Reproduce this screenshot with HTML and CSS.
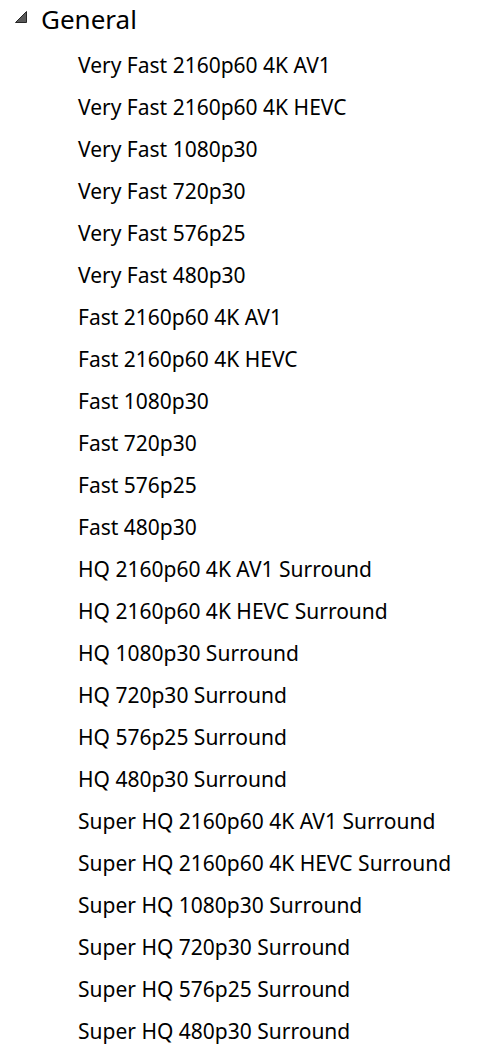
FILE: index.html
```html
<!DOCTYPE html>
<html>
<head>
<meta charset="utf-8">
<link rel="stylesheet" href="styles.css">
</head>
<body>
<div class="tree">
  <div class="node-header">
    <svg class="expander" width="12" height="12" viewBox="0 0 12 12"><polygon points="11.5,0.5 11.5,11.5 0.5,11.5" fill="#595959" stroke="#262626" stroke-width="1" stroke-linejoin="round"/></svg>
    <span class="node-title">General</span>
  </div>
  <ul class="items">
    <li>Very Fast 2160p60 4K AV1</li>
    <li>Very Fast 2160p60 4K HEVC</li>
    <li>Very Fast 1080p30</li>
    <li>Very Fast 720p30</li>
    <li>Very Fast 576p25</li>
    <li>Very Fast 480p30</li>
    <li>Fast 2160p60 4K AV1</li>
    <li>Fast 2160p60 4K HEVC</li>
    <li>Fast 1080p30</li>
    <li>Fast 720p30</li>
    <li>Fast 576p25</li>
    <li>Fast 480p30</li>
    <li>HQ 2160p60 4K AV1 Surround</li>
    <li>HQ 2160p60 4K HEVC Surround</li>
    <li>HQ 1080p30 Surround</li>
    <li>HQ 720p30 Surround</li>
    <li>HQ 576p25 Surround</li>
    <li>HQ 480p30 Surround</li>
    <li>Super HQ 2160p60 4K AV1 Surround</li>
    <li>Super HQ 2160p60 4K HEVC Surround</li>
    <li>Super HQ 1080p30 Surround</li>
    <li>Super HQ 720p30 Surround</li>
    <li>Super HQ 576p25 Surround</li>
    <li>Super HQ 480p30 Surround</li>
  </ul>
</div>
</body>
</html>
```
FILE: styles.css
```css
html, body {
  margin: 0;
  padding: 0;
  background: #ffffff;
}
body {
  font-family: "Noto Sans", "Open Sans", sans-serif;
  color: #000000;
}
.tree {
  display: flex;
  flex-direction: column;
}
.node-header {
  display: flex;
  align-items: center;
  height: 38px;
  padding-left: 15px;
}
.expander {
  display: block;
  margin-right: 14px;
  margin-top: -4px;
}
.node-title {
  font-size: 26px;
  line-height: 38px;
}
.items {
  list-style: none;
  margin: 0;
  padding: 6px 0 0 78px;
}
.items li {
  font-size: 21px;
  line-height: 42px;
  height: 42px;
  white-space: nowrap;
}
```
